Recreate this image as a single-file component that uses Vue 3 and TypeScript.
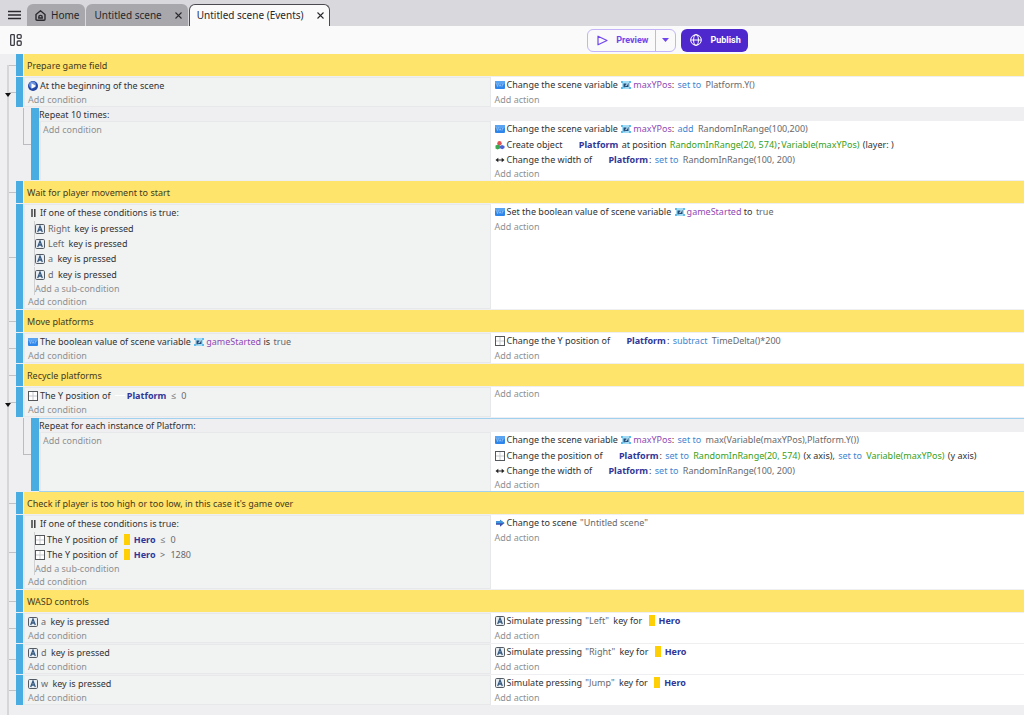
<script setup lang="ts">
type Kind = 'text' | 'value' | 'op' | 'expr' | 'object' | 'variable'
type IconName = 'var' | 'play' | 'key' | 'pos' | 'width' | 'create' | 'scene' | 'or'
interface Part { kind: Kind; text: string; thumb?: 'hero' | 'platform' }
interface Line { icon: IconName; parts: Part[]; children?: Line[] }
interface EventRow {
  comment?: string
  loop?: string
  selected?: boolean
  folded?: boolean
  conditions?: Line[]
  actions?: Line[]
  sub?: EventRow[]
}

const t = (text: string): Part => ({ kind: 'text', text })
const val = (text: string): Part => ({ kind: 'value', text })
const op = (text: string): Part => ({ kind: 'op', text })
const expr = (text: string): Part => ({ kind: 'expr', text })
const variable = (text: string): Part => ({ kind: 'variable', text })
const platform: Part = { kind: 'object', text: 'Platform', thumb: 'platform' }
const hero: Part = { kind: 'object', text: 'Hero', thumb: 'hero' }
const line = (icon: IconName, ...parts: Part[]): Line => ({ icon, parts })
const either = (...children: Line[]): Line => ({
  icon: 'or', parts: [t('If one of these conditions is true:')], children,
})
const pressed = (key: string) => line('key', val(key), t(' key is pressed'))
const simulate = (key: string) =>
  line('key', t('Simulate pressing '), val(`"${key}"`), t(' key for '), hero)

const events: EventRow[] = [
  { comment: 'Prepare game field' },
  {
    folded: true,
    conditions: [line('play', t('At the beginning of the scene'))],
    actions: [line('var', t('Change the scene variable '), variable('maxYPos'), t(': '), op('set to'), t(' '), val('Platform.Y()'))],
    sub: [{
      loop: 'Repeat 10 times:',
      conditions: [],
      actions: [
        line('var', t('Change the scene variable '), variable('maxYPos'), t(': '), op('add'), t(' '), val('RandomInRange(100,200)')),
        line('create', t('Create object '), platform, t(' at position '), expr('RandomInRange(20, 574)'), t(';'), expr('Variable(maxYPos)'), t(' (layer: )')),
        line('width', t('Change the width of '), platform, t(': '), op('set to'), t(' '), val('RandomInRange(100, 200)')),
      ],
    }],
  },
  { comment: 'Wait for player movement to start' },
  {
    conditions: [either(pressed('Right'), pressed('Left'), pressed('a'), pressed('d'))],
    actions: [line('var', t('Set the boolean value of scene variable '), variable('gameStarted'), t(' to '), val('true'))],
  },
  { comment: 'Move platforms' },
  {
    conditions: [line('var', t('The boolean value of scene variable '), variable('gameStarted'), t(' is '), val('true'))],
    actions: [line('pos', t('Change the Y position of '), platform, t(': '), op('subtract'), t(' '), val('TimeDelta()*200'))],
  },
  { comment: 'Recycle platforms' },
  {
    folded: true,
    conditions: [line('pos', t('The Y position of '), platform, t(' '), val('≤'), t(' '), val('0'))],
    actions: [],
    sub: [{
      loop: 'Repeat for each instance of Platform:',
      selected: true,
      conditions: [],
      actions: [
        line('var', t('Change the scene variable '), variable('maxYPos'), t(': '), op('set to'), t(' '), val('max(Variable(maxYPos),Platform.Y())')),
        line('pos', t('Change the position of '), platform, t(': '), op('set to'), t(' '), expr('RandomInRange(20, 574)'), t(' (x axis), '), op('set to'), t(' '), expr('Variable(maxYPos)'), t(' (y axis)')),
        line('width', t('Change the width of '), platform, t(': '), op('set to'), t(' '), val('RandomInRange(100, 200)')),
      ],
    }],
  },
  { comment: "Check if player is too high or too low, in this case it's game over" },
  {
    conditions: [either(
      line('pos', t('The Y position of '), hero, t(' '), val('≤'), t(' '), val('0')),
      line('pos', t('The Y position of '), hero, t(' '), val('>'), t(' '), val('1280')),
    )],
    actions: [line('scene', t('Change to scene '), val('"Untitled scene"'))],
  },
  { comment: 'WASD controls' },
  { conditions: [pressed('a')], actions: [simulate('Left')] },
  { conditions: [pressed('d')], actions: [simulate('Right')] },
  { conditions: [pressed('w')], actions: [simulate('Jump')] },
]

interface FlatRow extends EventRow { nested: boolean }
const rows: FlatRow[] = events.flatMap((e) => [
  { ...e, nested: false },
  ...(e.sub ?? []).map((s) => ({ ...s, nested: true })),
])

interface FlatLine extends Line { child: boolean; lastChild: boolean }
const flatten = (lines: Line[] = []): FlatLine[] => lines.flatMap((l) => [
  { ...l, child: false, lastChild: false },
  ...(l.children ?? []).map((c, i, all) => ({ ...c, child: true, lastChild: i === all.length - 1 })),
])
const columns = (row: FlatRow) => [
  { name: 'conditions', add: 'Add condition', lines: flatten(row.conditions) },
  { name: 'actions', add: 'Add action', lines: flatten(row.actions) },
]
</script>

<template>
  <div class="app">
    <svg class="defs" aria-hidden="true">
      <symbol id="i-var" viewBox="0 0 10 10"><rect y="1" width="10" height="8" rx="1" fill="#2f86ea" /><rect y="1" width="10" height="3" rx="1" fill="#5aa4f2" /><path d="M1.5 3.5l1 3 1-3M4.2 6.5l.9-2 .9 2M7.2 6.5v-2l1.4-.2" stroke="#a9d0fa" stroke-width=".7" fill="none" /></symbol>
      <symbol id="i-scenevar" viewBox="0 0 10 10"><rect x="1" y="1" width="8" height="8" fill="#a5dcf5" /><path d="M0 1h2v2H0zM8 1h2v2H8zM0 7h2v2H0zM8 7h2v2H8z" fill="#5cbdec" /><path d="M2.500 3.500h3L4.500 5l3-2v4H5l-2.500.5z" fill="#1e4c78" /><path d="M3.500 6.500l4-4-1.500 3z" fill="#e6f4fc" /></symbol>
      <symbol id="i-play" viewBox="0 0 10 10"><circle cx="5" cy="5" r="5" fill="#2345a4" /><circle cx="4.500" cy="3.800" r="3.400" fill="#6b91dc" /><path d="M3.500 2.200L8 5 3.500 7.800z" fill="#fff" /></symbol>
      <symbol id="i-key" viewBox="0 0 10 10"><rect x=".5" y=".5" width="9" height="9" rx="1.200" fill="#e8edf2" stroke="#555b62" /><path d="M2.700 8L5 2l2.300 6M3.500 6h3" fill="none" stroke="#34587f" stroke-width="1.300" /></symbol>
      <symbol id="i-pos" viewBox="0 0 10 10"><rect x=".5" y=".5" width="9" height="9" fill="#fff" stroke="#55585b" /><path d="M5 1v8M1 5h8" stroke="#c6c9cc" /></symbol>
      <symbol id="i-width" viewBox="0 0 10 10"><path d="M.5 5l2.800-2.200v1.600h3.400V2.800L9.500 5 6.700 7.200V5.600H3.300v1.600z" fill="#222" /></symbol>
      <symbol id="i-create" viewBox="0 0 10 10"><circle cx="4.500" cy="3.200" r="2.200" fill="#e25353" /><path d="M.5 5.500l2.500-1 2 1v3l-2.500 1-2-1z" fill="#3ca852" /><path d="M5 6l2-1 2.500 1v2L7.300 9.200 5 8.200z" fill="#4b62cf" /></symbol>
      <symbol id="i-scene" viewBox="0 0 10 10"><path d="M1 3.300h4V1.700L9.500 5 5 8.800V6.800H1z" fill="#3a4fae" /><path d="M1 3.300h4V1.700L9.500 5.300H1z" fill="#3d9ae2" /></symbol>
      <symbol id="i-or" viewBox="0 0 10 10"><path d="M3 1v8M5.800 1v8" stroke="#333" stroke-width="1.400" /></symbol>
    </svg>

    <header class="tabs">
      <button class="menu" aria-label="Main menu">
        <svg width="13" height="10" viewBox="0 0 13 10"><path d="M0 1.500h13M0 5h13M0 8.500h13" stroke="#2a2a2e" stroke-width="1.400" /></svg>
      </button>
      <div class="tab">
        <button class="tab-name home">
          <svg width="11" height="11" viewBox="0 0 11 11" fill="none" stroke="#2a2a2e" stroke-width="1.400"><path d="M1 4.500L5.500.8 10 4.500V9.200q0 1-1 1H2q-1 0-1-1zM3.800 8V7q0-1.600 1.700-1.600T7.200 7v1z" /></svg>Home
        </button>
      </div>
      <div class="tab">
        <button class="tab-name">Untitled scene</button>
        <button class="close" aria-label="Close Untitled scene"><svg width="7" height="7" viewBox="0 0 7 7"><path d="M.5.5l6 6M6.500.5l-6 6" stroke="#2a2a2e" stroke-width="1.100" /></svg></button>
      </div>
      <div class="tab active">
        <button class="tab-name">Untitled scene (Events)</button>
        <button class="close" aria-label="Close Untitled scene (Events)"><svg width="7" height="7" viewBox="0 0 7 7"><path d="M.5.5l6 6M6.500.5l-6 6" stroke="#2a2a2e" stroke-width="1.100" /></svg></button>
      </div>
    </header>

    <div class="toolbar">
      <button class="panels" aria-label="Panels">
        <svg width="12" height="12" viewBox="0 0 12 12" fill="none" stroke="#3d3d45" stroke-width="1.300"><rect x=".7" y=".7" width="3.600" height="10.600" rx=".5" /><rect x="7.200" y=".7" width="4" height="3.600" rx="1" /><rect x="7.200" y="7" width="4" height="4.300" rx="1" /></svg>
      </button>
      <div class="launch">
        <div class="split">
          <button class="preview">
            <svg width="11" height="11" viewBox="0 0 11 11"><path d="M1 1.200L10 5.500 1 9.800z" fill="none" stroke="#7046ec" stroke-width="1.200" stroke-linejoin="round" /></svg>Preview
          </button>
          <button class="more" aria-label="Preview options"><svg width="7" height="4" viewBox="0 0 7 4"><path d="M0 0h7L3.500 4z" fill="#7046ec" /></svg></button>
        </div>
        <button class="publish">
          <svg width="12" height="12" viewBox="0 0 12 12" fill="none" stroke="#fff"><circle cx="6" cy="6" r="5.300" /><ellipse cx="6" cy="6" rx="2.400" ry="5.300" /><path d="M.7 6h10.600" /></svg>Publish
        </button>
      </div>
    </div>

    <main class="sheet">
      <div v-for="(row, r) in rows" :key="r" class="row" :class="{ nested: row.nested, first: r === 0, selected: row.selected }">
        <div class="tree">
          <button v-if="row.folded" class="fold" aria-label="Fold"></button>
        </div>
        <div v-if="row.nested" class="branch"></div>
        <div class="bar"></div>
        <p v-if="row.comment" class="comment">{{ row.comment }}</p>
        <div v-else class="event">
          <div v-if="row.loop" class="loop">{{ row.loop }}</div>
          <div class="columns">
            <div v-for="col in columns(row)" :key="col.name" :class="col.name">
              <template v-for="(l, i) in col.lines" :key="i">
                <div class="line" :class="{ child: l.child, head: l.children }">
                  <svg class="icon"><use :href="'#i-' + l.icon" /></svg>
                  <template v-for="(p, j) in l.parts" :key="j">
                    <span v-if="p.thumb" class="thumb" :class="p.thumb"></span>
                    <svg v-if="p.kind === 'variable'" class="icon scene-icon"><use href="#i-scenevar" /></svg>
                    <span :class="p.kind">{{ p.text }}</span>
                  </template>
                </div>
                <button v-if="l.lastChild" class="add child">Add a sub-condition</button>
              </template>
              <button class="add">{{ col.add }}</button>
            </div>
          </div>
        </div>
      </div>
    </main>
  </div>
</template>

<style>
body { background: #efeff1; }
</style>

<style scoped>
.app { --split: 48vw; min-height: 100vh; display: flex; flex-direction: column; overflow: hidden; font: 9px/15px "Noto Sans", "Open Sans", sans-serif; color: #303234; }
.defs { position: absolute; width: 0; height: 0; }
button { font: inherit; color: inherit; background: none; border: 0; padding: 0; margin: 0; display: flex; align-items: center; cursor: pointer; white-space: nowrap; }
svg { flex: none; display: block; }

.tabs { height: 26px; display: flex; align-items: flex-end; background: #d9d9dd; gap: 1px; color: #26262a; font-size: 10px; }
.menu { height: 22px; padding: 0 5px 0 8px; }
.tab { height: 22px; display: flex; align-items: center; gap: 13px; padding: 0 6px 0 8px; box-sizing: border-box; background: #a8a8ac; border-radius: 6px 6px 0 0; }
.tab.active { background: #fafafa; border: 1px solid #4a4a50; border-bottom: 0; padding: 0 5px 0 7px; }
.home { gap: 5px; }
.toolbar { height: 28px; display: flex; align-items: center; background: #fafafa; padding: 0 10px; box-sizing: border-box; }
.launch { flex: 1; display: flex; gap: 5px; justify-content: center; padding-left: 299px; font-family: Roboto, "Noto Sans", sans-serif; font-weight: 700; }
.split { display: flex; border: 1px solid #c3b3f8; border-radius: 6px; color: #7046ec; }
.preview { height: 21px; padding: 0 7px 0 9px; gap: 8px; }
.more { padding: 0 6px; border-left: 1px solid #c3b3f8; }
.publish { padding: 0 7px 0 9px; gap: 8px; background: #4f28cd; color: #fff; border-radius: 6px; }

.sheet { flex: 1; display: flex; flex-direction: column; }
.sheet::after { content: ""; flex: 1; margin-left: 7px; border-left: 2px solid #d6d6d9; }
.row { display: flex; padding-bottom: 1px; }
.tree { width: 9px; margin: 0 0 -1px 7px; box-sizing: border-box; border-left: 2px solid #d6d6d9; display: flex; align-items: center; flex: none; position: relative; }
.tree::after { content: ""; flex: 1; height: 1px; background: #c2c2c6; }
.nested .tree::after { display: none; }
.first .tree { margin-top: 11px; align-items: flex-start; }
.fold { position: absolute; left: -4px; top: 50%; border: 3px solid transparent; border-top: 4px solid #111; border-bottom: 0; }
.branch { width: 8px; height: 37px; margin-left: 7px; box-sizing: border-box; border-left: 1px solid #bcbcc0; border-bottom: 1px solid #bcbcc0; flex: none; }
.bar { width: 7px; background: #49ade2; flex: none; }
.nested .bar { width: 8px; }
.comment { flex: 1; margin: 0 0 0 1px; padding: 4px 3px 3px; background: #ffe46b; color: #3f3a20; }
.event { flex: 1; min-width: 0; }
.columns { display: flex; }
.conditions { width: calc(var(--split) - 24px); box-sizing: border-box; flex: none; background: #f1f3f3; border: 1px solid #e6e8e9; border-width: 1px 1px 1px 2px; padding: 0 0 0 3px; }
.nested .conditions { width: calc(var(--split) - 40px); border-bottom: 0; padding-left: 2px; }
.actions { flex: 1; min-width: 0; background: #fff; padding-left: 4px; }
.selected .event { border: solid #a0d2f0; border-width: 1px 0; margin-bottom: -1px; }
.loop { line-height: 13px; }
.line { display: flex; align-items: center; height: 15px; white-space: pre; }
.conditions .line:nth-child(4n), .actions .line:nth-child(3n + 1) { margin-bottom: 1px; }
.head { padding-left: 1px; margin-bottom: 1px; }
.child { margin-left: 6px; border-left: 1px solid #cfd1d2; }
.icon { width: 10px; height: 10px; margin-right: 2px; }
.head .icon { margin-right: 1px; }
.scene-icon { margin-left: 1px; }
.add { line-height: 13px; color: #8e9092; }
.nested .conditions .add { padding: 1px 0 0; }
.value { color: #68696b; margin: 0 2px 0 1px; }
.op { color: #3f86d2; margin: 0 1px; }
.expr { color: #36a020; margin: 0 1px; }
.variable { color: #8f48b5; }
.object { color: #2f3699; font-weight: 700; margin-right: 1px; }
.thumb { width: 10px; height: 11px; margin: 0 2px; flex: none; }
.thumb.platform { height: 1px; background: #fff; }
.thumb.hero { box-sizing: border-box; border: solid transparent; border-width: 0 2px; background: #ffcf05 padding-box; }
</style>
